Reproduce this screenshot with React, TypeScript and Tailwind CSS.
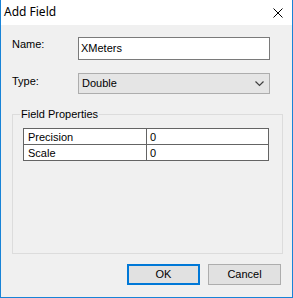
import React from "react";

const rows = [
  { name: "Precision", value: "0" },
  { name: "Scale", value: "0" },
];

export default function App() {
  return (
    <div
      className="w-[293px] h-[298px] flex flex-col border-x border-b border-[#1883d7] bg-[#f0f0f0] text-[11px] leading-[13px] text-black"
      style={{ fontFamily: '"Liberation Sans", Arial, sans-serif' }}
    >
      <div className="h-[25px] shrink-0 bg-white flex items-center justify-between pl-[3px] pr-[9px]">
        <span className="text-[12px] leading-[16px] mt-[-1px]" style={{ fontFamily: '"Noto Sans", "Open Sans", sans-serif' }}>
          Add Field
        </span>
        <svg width="10" height="10" viewBox="0 0 10 10" className="mt-[1px]">
          <path d="M0.5 0.5L9.5 9.5M9.5 0.5L0.5 9.5" stroke="#000" strokeWidth="1" fill="none" />
        </svg>
      </div>

      <div className="flex flex-col pl-[11px] pr-[10px] pt-[12px]">
        <div className="flex items-start">
          <label className="w-[66px] pt-[1px]">Name:</label>
          <div className="w-[192px] h-[23px] border border-[#7a7a7a] bg-white flex items-center pl-[2px]">
            XMeters
          </div>
        </div>

        <div className="flex items-start mt-[13px]">
          <label className="w-[66px] pt-[2px]">Type:</label>
          <div className="w-[192px] h-[21px] border border-[#adadad] bg-[#e5e5e5] flex items-center justify-between pl-[3px] pr-[5px]">
            <span>Double</span>
            <svg width="9" height="6" viewBox="0 0 9 6">
              <path d="M0.5 0.5L4.5 4.5L8.5 0.5" stroke="#404040" strokeWidth="1.2" fill="none" />
            </svg>
          </div>
        </div>

        <fieldset className="mt-[14px] h-[146px] w-[271px] border border-[#dcdcdc]">
          <legend className="ml-[7px] px-[1px]">Field Properties</legend>
          <table className="ml-[10px] mt-[7px] w-[246px] border-collapse">
            <tbody>
              {rows.map((r) => (
                <tr key={r.name} className="h-[16px]">
                  <td className="w-[123px] border border-[#646464] bg-white pl-[4px] py-0 leading-[14px]">{r.name}</td>
                  <td className="border border-[#646464] bg-white pl-[3px] py-0 leading-[14px]">{r.value}</td>
                </tr>
              ))}
            </tbody>
          </table>
        </fieldset>

        <div className="flex justify-end gap-[8px] mt-[10px] pr-[1px]">
          <button className="w-[73px] h-[21px] border-2 border-[#0078d7] bg-[#e1e1e1] leading-[13px]">OK</button>
          <button className="w-[73px] h-[21px] border border-[#adadad] bg-[#e1e1e1] leading-[13px]">Cancel</button>
        </div>
      </div>
    </div>
  );
}
